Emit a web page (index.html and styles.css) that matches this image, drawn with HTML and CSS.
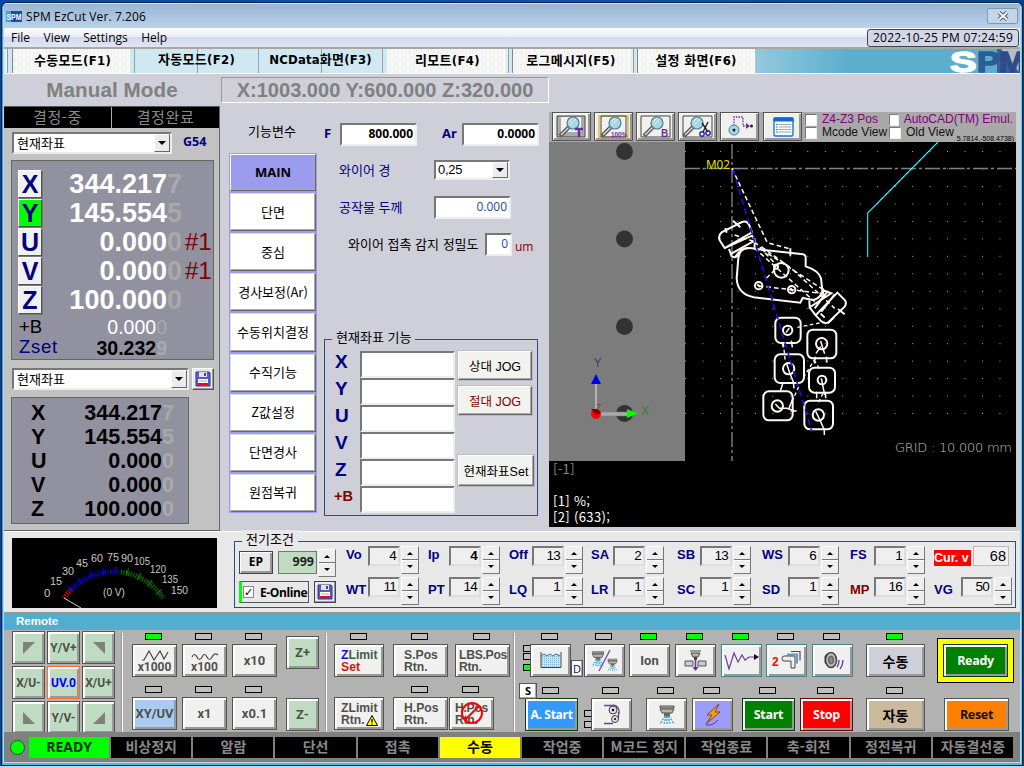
FILE: index.html
```html
<!DOCTYPE html>
<html lang="ko">
<head>
<meta charset="utf-8">
<title>SPM EzCut Ver. 7.206</title>
<link rel="stylesheet" href="styles.css">
</head>
<body>
<svg class="defs" width="0" height="0">
  <defs>
    <symbol id="lens" viewBox="0 0 33 25">
      <path d="M3 22L12 13" stroke="#555" stroke-width="4"/><path d="M4 21L12 13" stroke="#ddd" stroke-width="1.5"/>
      <circle cx="16" cy="9" r="6" fill="#a9d5e6" stroke="#4a7f98" stroke-width="1.2"/><path d="M12 8l4-4M13 11l6-6" stroke="#e8f8ff"/>
    </symbol>
    <symbol id="disk" viewBox="0 0 16 16">
      <path d="M1 1h13l1 1v13H1z" fill="#5b5bc4" stroke="#333399"/><path d="M4 1h8v5H4z" fill="#dfe3f5"/><path d="M9 2h2v3H9z" fill="#447"/><path d="M3 8h10v6H3z" fill="#fff"/><path d="M4 10h8" stroke="#aaa"/><path d="M3 13h10" stroke="#f00" stroke-width="2"/>
    </symbol>
    <symbol id="shower" viewBox="0 0 20 20">
      <path d="M3 1h14v2H3zM3 4h14l-2 4H5z" fill="#bbb5a8" stroke="#444" stroke-width=".9"/><path d="M7 8h6v3H7z" fill="#666"/><path d="M8 11L3 19M9 11L7 19M11 11l2 8M12 11l5 8M10 11v8" stroke="#4ba3c7" stroke-width="1.4" stroke-dasharray="2 1"/>
    </symbol>
    <pattern id="dots" width="17.47" height="17.47" patternUnits="userSpaceOnUse" x="136" y="9"><rect width="1" height="1" fill="#aaa"/></pattern>
    <pattern id="check" width="2" height="2" patternUnits="userSpaceOnUse"><rect width="2" height="2" fill="#c5e5f0"/><rect width="1" height="1" fill="#7bb9d2"/></pattern>
    <linearGradient id="rod"><stop offset="0" stop-color="#666"/><stop offset=".5" stop-color="#ccc"/><stop offset="1" stop-color="#666"/></linearGradient>
  </defs>
</svg>
<div class="window">
  <header class="titlebar">
    <svg width="16" height="11" viewBox="0 0 16 11"><rect width="16" height="11" fill="#1b4fa5"/><rect width="5" height="11" fill="#3fa2dc"/><text x=".5" y="9" font-family="Liberation Sans" font-weight="bold" font-size="9" textLength="15" lengthAdjust="spacingAndGlyphs" fill="#fff">SPM</text></svg>
    <span class="title">SPM EzCut Ver. 7.206</span>
    <span class="close"><svg width="12" height="10" viewBox="0 0 12 10"><path d="M2 1.5L10 8.5M10 1.5L2 8.5" stroke="#555b66" stroke-width="4"/><path d="M2 1.5L10 8.5M10 1.5L2 8.5" stroke="#f4f7fb" stroke-width="2"/></svg></span>
  </header>
  <nav class="menubar"><span>File</span><span>View</span><span>Settings</span><span>Help</span><span class="clock">2022-10-25 PM 07:24:59</span></nav>
  <nav class="tabs">
    <i class="grip"></i><span class="tab">수동모드(F1)</span>
    <div class="flat"><span class="ftab">자동모드(F2)</span><span class="ftab">NCData화면(F3)</span></div>
    <span class="tab">리모트(F4)</span><i class="grip"></i><span class="tab">로그메시지(F5)</span><i class="grip"></i><span class="tab">설정 화면(F6)</span>
    <div class="banner"><svg width="71" height="24" viewBox="0 0 71 24"><rect x="48" width="23" height="24" fill="#3d5f9b"/><path d="M52 0h19v24z" fill="#b9bfc9"/><g font-family="Liberation Sans" font-weight="bold" font-size="30" stroke-width="1.5"><text y="23" x="1" textLength="27" lengthAdjust="spacingAndGlyphs" fill="#fff" stroke="#fff">S</text><text y="23" x="28" fill="#2d5b94" stroke="#2d5b94" textLength="23" lengthAdjust="spacingAndGlyphs">P</text><text y="23" x="50" fill="#2e4c88" stroke="#2e4c88" textLength="27" lengthAdjust="spacingAndGlyphs">M</text></g></svg></div>
  </nav>

  <main class="main">
    <aside class="left">
      <h1>Manual Mode</h1>
      <div class="lpanel">
        <div class="states"><span>결정-중</span><span>결정완료</span></div>
        <div class="selrow"><div class="select">현재좌표<b class="drop"></b></div><strong class="g54">G54</strong></div>
        <div class="axes">
          <div class="axis"><b class="key">X</b><span class="val">344.217<i>7</i></span></div>
          <div class="axis"><b class="key on">Y</b><span class="val">145.554<i>5</i></span></div>
          <div class="axis"><b class="key">U</b><span class="val">0.000<i>0</i></span><em>#1</em></div>
          <div class="axis"><b class="key">V</b><span class="val">0.000<i>0</i></span><em>#1</em></div>
          <div class="axis"><b class="key">Z</b><span class="val">100.000<i>0</i></span></div>
          <div class="sub"><span>+B</span><span class="sv">0.000<i>0</i></span></div>
          <div class="sub zset"><span>Zset</span><span class="sv">30.232<i>9</i></span></div>
        </div>
        <div class="selrow second"><div class="select">현재좌표<b class="drop"></b></div><span class="save"><svg width="16" height="16"><use href="#disk"/></svg></span></div>
        <div class="axes2">
          <div><b>X</b><span>344.217<i>7</i></span></div><div><b>Y</b><span>145.554<i>5</i></span></div><div><b>U</b><span>0.000<i>0</i></span></div><div><b>V</b><span>0.000<i>0</i></span></div><div><b>Z</b><span>100.000<i>0</i></span></div>
        </div>
      </div>
    </aside>

    <section class="mid">
      <div class="coords">X:1003.000 Y:600.000 Z:320.000</div>
      <div class="midbody">
        <div class="funcs">
          <div class="flabel">기능변수</div>
          <div class="fmenu"><span class="sel">MAIN</span><span>단면</span><span>중심</span><span>경사보정(Ar)</span><span>수동위치결정</span><span>수직기능</span><span>Z값설정</span><span>단면경사</span><span>원점복귀</span></div>
        </div>
        <div class="params">
          <div class="prow r1"><b>F</b><span class="inp">800.000</span><b class="ar">Ar</b><span class="inp">0.0000</span></div>
          <div class="prow r2"><span class="lab">와이어 경</span><div class="select">0,25<b class="drop"></b></div></div>
          <div class="prow r3"><span class="lab">공작물 두께</span><span class="inp">0.000</span></div>
          <div class="prow r4"><span class="lab">와이어 접촉 감지 정밀도</span><span class="inp">0</span><span class="um">um</span></div>
          <div class="group jog">
            <span class="legend">현재좌표 기능</span>
            <div class="labels"><b>X</b><b>Y</b><b>U</b><b>V</b><b>Z</b><b class="pb">+B</b></div>
            <div class="fields"><i></i><i></i><i></i><i></i><i></i><i></i></div>
            <div class="jbtns"><span>상대 JOG</span><span class="red">절대 JOG</span><span class="set">현재좌표Set</span></div>
          </div>
        </div>
      </div>
    </section>

    <section class="right">
      <div class="toolbar">
        <div class="tools">
          <span><svg width="33" height="25"><path d="M2 2h28v21H2z" fill="#aaa" stroke="#444"/><path d="M6 3h20v15H6z" fill="#f1f1ee"/><use href="#lens" x="2" width="33" height="25"/><path d="M20 15h8M24 15v8" stroke="#6a2d9c" stroke-width="2.5"/></svg></span>
          <span><svg width="33" height="25"><path d="M2 2h29v21H2z" fill="#f1f1ee" stroke="#e2b34a" stroke-width="1.4"/><path d="M4 2h25v21H4z" fill="none" stroke="#444"/><use href="#lens" x="2" width="33" height="25"/><text x="14" y="23" class="tg" font-size="7.500" textLength="16" lengthAdjust="spacingAndGlyphs">100%</text></svg></span>
          <span><svg width="33" height="25"><path d="M2 2h29v21H2z" fill="#f1f1ee" stroke="#444"/><use href="#lens" x="2" width="33" height="25"/><text x="22" y="23" class="tg" font-size="10">B</text></svg></span>
          <span><svg width="33" height="25"><path d="M2 2h29v21H2z" fill="#f1f1ee" stroke="#444"/><use href="#lens" x="0" width="33" height="25"/><path d="M21 9l6 9M27 8l-5 10" stroke="#222" stroke-width="1.4"/><circle cx="21" cy="20" r="2.2" fill="none" stroke="#2424a5" stroke-width="1.4"/><circle cx="27" cy="19" r="2.2" fill="none" stroke="#2424a5" stroke-width="1.4"/></svg></span>
          <span><svg width="33" height="25"><path d="M11 12V3h9v9h5" fill="none" stroke="#6a2d9c" stroke-width="1.3" stroke-dasharray="1.5 1.2"/><path d="M23 9l4 3-4 3z" fill="#6a2d9c"/><circle cx="28.500" cy="12" r="1.500" fill="#222"/><circle cx="11" cy="16" r="5" fill="#a9d5e6" stroke="#4a7f98"/><circle cx="11" cy="16" r="1.500" fill="#222"/></svg></span>
          <span><svg width="33" height="25"><rect x="8" y="4" width="19" height="18" rx="1.500" fill="#fff" stroke="#1677d8" stroke-width="1.400"/><path d="M7.500 5.500h20" stroke="#1268d0" stroke-width="4"/><path d="M10 10.500h2M10 13h2M10 15.500h2M10 18h2" stroke="#2a7fd5"/><path d="M13 10.500h12M13 13h12M13 15.500h12M13 18h12" stroke="#9aa"/></svg></span>
        </div>
        <div class="checks"><span class="pur"><i></i>Z4-Z3 Pos</span><span class="pur"><i></i>AutoCAD(TM) Emul.</span><span><i></i>Mcode View</span><span><i></i>Old View</span></div>
        <span class="pos">5.7814,-508.4738)</span>
      </div>
      <svg class="view" width="467" height="319" viewBox="0 0 467 319">
        <rect width="467" height="319"/><rect width="136" height="319" fill="#7c7c7c"/>
        <rect x="136" y="9" width="317" height="266" fill="url(#dots)"/>
        <g fill="#333"><circle cx="75.500" cy="9.500" r="8.500"/><circle cx="75.500" cy="97" r="8.500"/><circle cx="75.500" cy="184.500" r="8.500"/><circle cx="75.500" cy="271.500" r="8.500"/></g>
        <path d="M183 2V319M136 26.500H467" stroke="#808080" stroke-width="1.400" stroke-dasharray="15 3 3 3" fill="none"/>
        <text x="157" y="27" font-size="12" fill="#e0e000" font-family="Noto Sans" textLength="24" lengthAdjust="spacingAndGlyphs">M02</text>
        <g transform="translate(-1,-37) scale(.33333)" fill="none" stroke="#fff9f2" stroke-width="6">
          <path d="M1170 111L959 324V456" stroke="#00f3ff" stroke-width="3.500"/>
          <path d="M1168 113L990 293" stroke="#eee" stroke-width="2" stroke-dasharray="6 12"/>
          <path d="M552 190L658 413L726 432M620 410L690 485L650 525M640 433L820 550M620 430L800 590M632 543L731 554L824 566M560 390L620 410M640 425L730 490L815 568L860 610" stroke-dasharray="14 9" stroke-width="4.500"/>
          <path d="M727 430v22M555 347l22 20M840 655l18-18M870 612l20 16"/>
          <path d="M589 431Q600 426 625 432L765 448Q774 450 773 460L773 484Q812 496 819 520L823 557Q818 580 795 585L764 579L757 593L617 577Q568 567 566 520L571 460Q574 438 589 431Z"/>
          <path d="M530 429L514 404Q511 390 522 381L582 351Q597 346 603 359L612 382ZM530 429L612 392L620 406L620 430M543 432L551 454Q565 461 575 449M550 446L620 407M563 455Q575 430 605 429"/>
          <path d="M868 563L889 584Q898 593 890 605L842 651Q831 659 820 649L803 631ZM824 555L850 565L785 607L784 586M803 631L785 607M820 620L860 568M800 610L840 558M815 586Q832 577 824 550"/>
          <circle cx="700" cy="496" r="22"/><circle cx="684" cy="485" r="6"/><circle cx="632" cy="542" r="11"/><circle cx="731" cy="554" r="11"/>
          <path d="M628 538l8 8M727 550l8 8"/><path d="M532 369l4 14M830 638l-12-12"/>
        </g>
        <g transform="translate(-1,168) scale(.33333)" fill="none" stroke="#fff9f2" stroke-width="6">
          <rect x="682" y="23" width="76" height="76" rx="17"/><rect x="778" y="59" width="87" height="86" rx="17"/><rect x="680" y="133" width="88" height="86" rx="17"/><rect x="783" y="173" width="78" height="75" rx="17"/><rect x="646" y="244" width="88" height="87" rx="17"/><rect x="769" y="272" width="86" height="86" rx="17"/>
          <circle cx="719" cy="61" r="14"/><circle cx="821" cy="101" r="17"/><circle cx="722" cy="176" r="17"/><circle cx="822" cy="210" r="13"/><circle cx="688" cy="288" r="17"/><circle cx="811" cy="315" r="17"/>
          <path d="M724 54l-10 14M818 93l6 20 6 18M818 110l-14 20M715 158l10 30 12 30M820 205l10 50M682 282l12 13 22 0 24 8M803 304l12 24 14 32M702 96l4 16M730 92l3 20M802 140l-3 20M835 140l2 18M705 218l-9 28M736 215l2 20M806 245v20M833 245v20M735 265l-12 30M728 303h18M829 355v20" stroke-width="4.500"/>
          <path d="M748 52L830 36M706 100L712 155M802 145L768 200M798 150L814 175M752 230L732 275M825 250L808 285" stroke-width="4" stroke-dasharray="11 8"/>
        </g>
        <path d="M184 28L263 290" stroke="#1313e8" stroke-width="1.700" stroke-dasharray="6 4"/>
        <rect x="45" y="236" width="4" height="34" fill="url(#rod)"/><rect x="50" y="270" width="29" height="4" fill="#aaa" stroke="#777" stroke-width=".5"/>
        <path d="M42 242l5-10 5 10z" fill="#00e"/><path d="M78 267l11 4.500-11 4.500z" fill="#0f0"/><circle cx="47" cy="272" r="5" fill="#f00"/><path d="M42 267h6l4 4-5 2z" fill="#800"/>
        <g class="dj" font-size="12"><text x="45" y="225" fill="#000080">Y</text><text x="92" y="273" fill="#008000">X</text><text x="46" y="269" font-size="9" fill="#800000">Z</text><text x="346" y="310" font-size="13" fill="#c4c4c4" textLength="117">GRID : 10.000 mm</text></g>
      </svg>
      <pre class="console"><span>[-1]</span>

[1] %;
[2] (633);</pre>
    </section>
  </main>

  <section class="elec">
    <svg class="meter" width="205" height="70" viewBox="0 0 205 70">
      <rect width="205" height="70"/>
      <g fill="none" stroke-width="5" stroke-dasharray="1 1.500"><path d="M52 60A60 60 0 0 1 60 51" stroke="#f00"/><path d="M60 51A60 60 0 0 1 108 34" stroke="#00f"/><path d="M109 34A60 60 0 0 1 151 60" stroke="#008000"/></g>
      <g fill="none" stroke-width="8" stroke-dasharray="1 11.500"><path d="M58 51A60 60 0 0 1 107 33" stroke="#00f"/><path d="M115 34A60 60 0 0 1 151 60" stroke="#008000"/></g>
      <path d="M52 60L69 70" stroke="#ccc"/>
      <g class="scale"><text x="32" y="59">0</text><text x="38" y="47" textLength="12" lengthAdjust="spacingAndGlyphs">15</text><text x="50" y="37" textLength="12" lengthAdjust="spacingAndGlyphs">30</text><text x="64" y="29" textLength="12" lengthAdjust="spacingAndGlyphs">45</text><text x="79" y="24" textLength="12" lengthAdjust="spacingAndGlyphs">60</text><text x="95" y="23" textLength="12" lengthAdjust="spacingAndGlyphs">75</text><text x="109" y="24" textLength="12" lengthAdjust="spacingAndGlyphs">90</text><text x="122" y="27" textLength="16" lengthAdjust="spacingAndGlyphs">105</text><text x="138" y="35" textLength="16" lengthAdjust="spacingAndGlyphs">120</text><text x="150" y="45" textLength="16" lengthAdjust="spacingAndGlyphs">135</text><text x="159" y="56" textLength="17" lengthAdjust="spacingAndGlyphs">150</text><text x="91" y="58" textLength="22" lengthAdjust="spacingAndGlyphs">(0 V)</text></g>
    </svg>
    <div class="group cond">
      <span class="legend">전기조건</span>
      <div class="ep">
        <div class="eprow"><span class="epb">EP</span><span class="n999">999</span><i class="spin"></i></div>
        <div class="eprow two"><span class="online"><i>✓</i>E-Online</span><span class="save big"><svg width="16" height="16"><use href="#disk"/></svg></span></div>
      </div>
      <div class="knobs">
        <div><b>Vo</b><span>4</span><i class="spin"></i></div><div><b>Ip</b><span class="bd">4</span><i class="spin"></i></div><div><b>Off</b><span>13</span><i class="spin"></i></div><div><b>SA</b><span>2</span><i class="spin"></i></div><div><b>SB</b><span>13</span><i class="spin"></i></div><div><b>WS</b><span>6</span><i class="spin"></i></div><div><b>FS</b><span>1</span><i class="spin"></i></div><div class="cur"><b>Cur. v</b><span>68</span></div>
        <div><b>WT</b><span>11</span><i class="spin"></i></div><div><b>PT</b><span>14</span><i class="spin"></i></div><div><b>LQ</b><span>1</span><i class="spin"></i></div><div><b>LR</b><span>1</span><i class="spin"></i></div><div><b>SC</b><span>1</span><i class="spin"></i></div><div><b>SD</b><span>1</span><i class="spin"></i></div><div><b class="mp">MP</b><span>16</span><i class="spin"></i></div><div><b>VG</b><span>50</span><i class="spin"></i></div>
      </div>
    </div>
  </section>

  <div class="rhead">Remote</div>
  <section class="remote">
    <div class="pad">
      <span class="btn"><svg width="12" height="12"><path d="M0 0h12L0 12z"/></svg></span><span class="btn">Y/V+</span><span class="btn"><svg width="12" height="12"><path d="M0 0h12v12z"/></svg></span>
      <span class="btn">X/U-</span><span class="btn uv">UV.0</span><span class="btn">X/U+</span>
      <span class="btn"><svg width="12" height="12"><path d="M0 0v12h12z"/></svg></span><span class="btn">Y/V-</span><span class="btn"><svg width="12" height="12"><path d="M12 0v12H0z"/></svg></span>
    </div>
    <div class="sec s2">
      <div class="rows">
        <div class="rrow">
          <div class="cell"><i class="led on"></i><span class="btn w45 col"><svg width="28" height="11"><path d="M1 10h2L8 1l5 9 6-9 4 8 4-7" fill="none" stroke="#444" stroke-width="1.200"/></svg>x1000</span></div>
          <div class="cell"><i class="led"></i><span class="btn w45 col"><svg width="28" height="11"><path d="M1 7q2.500-5 5 0t5 0 5 0 5 0 6-2" fill="none" stroke="#444" stroke-width="1.200"/></svg>x100</span></div>
          <div class="cell"><i class="led"></i><span class="btn w45 big">x10</span></div>
        </div>
        <div class="rrow">
          <div class="cell"><i class="led"></i><span class="btn w45 big sky">XY/UV</span></div>
          <div class="cell"><i class="led"></i><span class="btn w45 big">x1</span></div>
          <div class="cell"><i class="led"></i><span class="btn w45 big">x0.1</span></div>
        </div>
      </div>
      <div class="zs"><span class="btn">Z+</span><span class="btn">Z-</span></div>
    </div>
    <div class="sec s3">
      <div class="rrow">
        <div class="cell"><i class="led"></i><span class="btn w50 two"><span class="zl"><em>Z</em>Limit<br><u>Set</u></span></span></div>
        <div class="cell"><i class="led"></i><span class="btn w55 two">S.Pos<br>Rtn.</span></div>
        <div class="cell"><i class="led"></i><span class="btn w55 two lbs">LBS.Pos<br>Rtn.</span></div>
      </div>
      <div class="rrow b">
        <div class="cell"><i class="led off"></i><span class="btn w50 two"><span>ZLimit<br>Rtn.<svg class="warn" width="12" height="11"><path d="M6 .5L11.500 10.500H.5z" fill="#ff0" stroke="#000"/><path d="M6 4v3.500M6 8.500v1" stroke="#000" stroke-width="1.300"/></svg></span></span></div>
        <div class="cell"><i class="led"></i><span class="btn w55 two">H.Pos<br>Rtn.</span></div>
        <div class="cell"><i class="led"></i><span class="btn w45 two hno">H.Pos<br>Rtn.<svg class="ban" width="24" height="24"><circle cx="12" cy="12" r="10" fill="none" stroke="#f00" stroke-width="2"/><path d="M5 19L19 5" stroke="#f00" stroke-width="2"/></svg></span></div>
      </div>
    </div>
    <div class="sec s4">
      <div class="rrow">
        <div class="minis"><i></i><i></i><i class="on"></i></div>
        <div class="cell"><i class="led"></i><span class="btn w41"><svg width="22" height="18"><path d="M1 3l3-1.500 3 2 3-2 3 2 3-2 4 1.500V15H1z" fill="url(#check)"/><path d="M1 0v15.500h20V0" fill="none" stroke="#444"/><path d="M1 4l3-2 3 2 3-2 3 2 3-2 4 2" fill="none" stroke="#247ba5"/></svg></span></div>
        <span class="tag d">D</span>
        <div class="cell"><i class="led"></i><span class="btn w41"><svg width="30" height="24"><use href="#shower" x="0" y="1" width="16" height="18"/><use href="#shower" x="16" y="9" width="13" height="14"/><path d="M20 1L9 22" stroke="#7a55b0" stroke-width="1.500"/></svg></span></div>
        <div class="cell"><i class="led on"></i><span class="btn w41 big">Ion</span></div>
        <div class="cell"><i class="led on"></i><span class="btn w41"><svg width="24" height="22"><path d="M6 1h11M7 3h9l-2 4H9z" stroke="#444" fill="#bbb5a8"/><path d="M10 7h3v3h-3z" fill="#444"/><path d="M1 11h8v5H1zM14 11h8v5h-8z" fill="#ccc" stroke="#555"/><path d="M11.500 10v9" stroke="#6a2d9c" stroke-width="1.500"/><path d="M8.500 17h6l-3 4z" fill="#6a2d9c"/></svg></span></div>
        <div class="cell"><i class="led on"></i><span class="btn w41 teal"><svg width="36" height="20"><path d="M1 4l4 14 5-16 4 9 4-7 3 5 4-3h7" fill="none" stroke="#6a3d9c" stroke-width="1.200"/><path d="M30 3l5 3-5 3z" fill="#203"/></svg></span></div>
        <div class="cell"><i class="led"></i><span class="btn w41 teal"><svg width="32" height="22"><text x="1" y="16" font-family="Liberation Sans" font-weight="bold" font-size="12" fill="#f00">2</text><path d="M16 4.500h10v9" fill="none" stroke="#58a2b4" stroke-width="2"/><path d="M20 1.500h9v9" fill="none" stroke="#6a2d9c" stroke-width="1.200"/><path d="M13 6h11v12h-4v-7h-7q-2 0-2-2.500t2-2.500z" fill="#eee" stroke="#444"/></svg></span></div>
        <div class="cell"><i class="led"></i><span class="btn w41 teal"><svg width="26" height="24"><path d="M8 4L5 7v7l4 4" fill="#888" stroke="#444"/><ellipse cx="11" cy="11" rx="5.500" ry="7.500" fill="#bbb" stroke="#444" stroke-width="1.500"/><ellipse cx="11" cy="11" rx="2.500" ry="4" fill="#888" stroke="#555"/><path d="M17 18q2-3 2-7M20 20q3-4 3-9" fill="none" stroke="#6a3d9c" stroke-width="1.400"/></svg></span></div>
        <div class="cell"><i class="led on"></i><span class="btn w59 ko lav">수동</span></div>
        <div class="readybox"><span class="btn w65 act green">Ready</span></div>
      </div>
      <div class="rrow b">
        <div class="cell"><i class="led"></i><span class="tag s">S</span><span class="btn w53 act blue">A. Start</span></div>
        <div class="minis"><i></i><i></i></div>
        <div class="cell"><i class="led"></i><span class="btn w41"><svg width="24" height="23"><circle cx="13" cy="7" r="4" fill="#ddd" stroke="#444"/><circle cx="13" cy="7" r="1.200"/><circle cx="15" cy="16" r="3.500" fill="#ddd" stroke="#444"/><circle cx="15" cy="16" r="1"/><path d="M4 2.500h9M18.500 9v6M4 20.500h9" fill="none" stroke="#6a3d9c" stroke-width="1.300"/><path d="M13 2q7 1 6 9" fill="none" stroke="#555" stroke-width="1.300"/></svg></span></div>
        <div class="cell"><i class="led"></i><span class="btn w41"><svg width="20" height="20"><use href="#shower"/></svg></span></div>
        <div class="cell"><i class="led"></i><span class="btn w41 vio"><svg width="20" height="24"><path d="M16 1L4 12h5L3 21 17 9h-5z" fill="#ff9a1c" stroke="#7a4a20"/><path d="M3 22q7 1 12-5" fill="none" stroke="#6a2d9c"/></svg></span></div>
        <div class="cell"><i class="led"></i><span class="btn w53 act green">Start</span></div>
        <div class="cell"><i class="led"></i><span class="btn w53 act stop">Stop</span></div>
        <div class="cell"><i class="led"></i><span class="btn w59 ko tan">자동</span></div>
        <div class="cell"><i class="led off"></i><span class="btn w65 act reset">Reset</span></div>
      </div>
    </div>
  </section>

  <footer class="status"><i class="lamp"></i><div><span class="rdy">READY</span><span>비상정지</span><span>알람</span><span>단선</span><span>접촉</span><span class="yel">수동</span><span>작업중</span><span>M코드 정지</span><span>작업종료</span><span>축-회전</span><span>정전복귀</span><span>자동결선중</span></div></footer>
</div>
<div class="taskbar"></div>
</body>
</html>
```
FILE: styles.css
```css
* { box-sizing: border-box; }
body { margin: 0; width: 1024px; height: 768px; overflow: hidden; display: flex; flex-direction: column; background: linear-gradient(90deg, #0746a8, #0a54b0 60%, #064088); font-family: "Liberation Sans", "Noto Sans CJK KR", sans-serif; font-size: 12px; color: #000; white-space: nowrap; }
.defs { position: absolute; }
i, em, u { font-style: normal; text-decoration: none; }
.window { margin: 3px 2px 0 2px; height: 762px; border: 1px solid #c8e2f4; border-left-color: #18b4f0; border-right-color: #5ad0f0; border-bottom: 2px solid #44bfe0; border-radius: 5px 5px 0 0; background: #cecfd8; display: flex; flex-direction: column; box-shadow: 0 0 0 1px #10243c; padding: 0 1px; overflow: hidden; }
.taskbar { margin-top: 1px; height: 2px; background: #c9d3e0; }

.titlebar { height: 24px; flex: none; display: flex; align-items: center; padding: 0 2px; background: linear-gradient(#9ab5d3, #bad2ea); font-family: "Open Sans", sans-serif; }
.title { margin-left: 4px; letter-spacing: .1px; }
.close { margin-left: auto; width: 31px; height: 16px; border: 1px solid #8297b2; border-radius: 2px; background: #c2d5e9; display: flex; align-items: center; justify-content: center; }
.menubar { height: 19px; flex: none; display: flex; align-items: center; padding-left: 7px; gap: 13.500px; background: linear-gradient(#fff 0, #e9edf6 45%, #d5dbee 50%, #dfe5f4 100%); font-family: "Open Sans", sans-serif; }
.clock { margin-left: auto; margin-right: 1px; width: 152px; height: 18px; line-height: 15px; border: 1px solid #444; border-radius: 3px; background: #d3d6e6; text-align: center; letter-spacing: .26px; }
.tabs { height: 27px; flex: none; display: flex; border-top: 2px solid #aaa79e; border-bottom: 1px solid #fff; background: #cfe8f1; font: bold 13px "DejaVu Sans Condensed", "Noto Sans CJK KR", sans-serif; line-height: 24px; letter-spacing: .3px; }
.grip { width: 8px; flex: none; border-right: 1px solid #888; box-shadow: inset 3px 0 #e0f0f5, inset 4px 0 #999; }
.grip:first-child { width: 9px; }
.tab { width: 117px; flex: none; text-align: center; background: repeating-conic-gradient(#fff 0 25%, #eeeeec 0 50%) 0 0 / 2px 2px; border-right: 1px solid #fff; }
.grip:first-child + .tab { padding-left: 3px; }
.flat { width: 257px; flex: none; padding: 0 4px; display: flex; line-height: 22px; }
.ftab { flex: 1; text-align: center; border-left: 1px solid #8aa; background: linear-gradient(90deg, transparent 62px, #8fa2a8 62px 63px, transparent 63px); }
.flat .ftab:last-child { border-right: 1px solid #8aa; letter-spacing: .2px; }
.flat + .tab { width: 118px; padding-left: 4px; }
.banner { flex: 1; display: flex; justify-content: flex-end; background: linear-gradient(90deg, #93c9de, #5daecd 35%); overflow: hidden; }

.main { height: 457px; flex: none; display: flex; padding-top: 2px; }
.left { width: 216px; flex: none; }
h1 { margin: 0; height: 30px; line-height: 28px; font-size: 20.600px; color: #808080; text-align: center; letter-spacing: .1px; }
.lpanel { height: 425px; background: #c2c2c2; border: 1px solid #666; border-width: 0 1px 1px 0; }
.states { height: 22px; display: flex; background: #000; border-top: 1px solid #555; color: #8c8c8c; font: 15px/20px "Noto Sans CJK KR"; letter-spacing: .6px; }
.states span { flex: 1; text-align: center; }
.states span + span { border-left: 1px solid #aaa; }
.selrow { display: flex; margin: 4px 0 0 8px; height: 22px; }
.select { width: 160px; display: flex; justify-content: space-between; align-items: center; background: #fff; border: 2px solid; border-color: #777 #eee #eee #777; padding-left: 3px; font: 13px/16px "Noto Sans CJK KR"; }
.drop { width: 16px; align-self: stretch; background: #ececec; border: 1px solid; border-color: #fff #666 #666 #fff; display: flex; align-items: center; justify-content: center; }
.drop::after { content: ""; border: 4px solid transparent; border-top-color: #000; border-bottom: 0; }
.g54 { margin-left: 11px; font: bold 12.500px/20px "Open Sans"; color: #000080; }
.axes { margin: 6px 0 0 7px; width: 203px; height: 200px; border: 1px solid #666; background: #9191a0; padding: 8px 0 0 6px; }
.axis { height: 29px; display: flex; align-items: center; font-size: 27px; color: #fff; }
.key { width: 24px; height: 28px; line-height: 27px; font-size: 25px; text-align: center; color: #000080; background: #f0f0f0; border: 1px solid; border-color: #fff #555 #555 #fff; box-shadow: 1px 1px #777; }
.key.on { background: #0f0; }
.val { width: 140px; padding-top: 2px; text-align: right; font-weight: bold; }
.val i, .sv i, .axes2 i { color: #a9a9a9; }
.axis em { font-size: 24px; color: #800000; margin-left: 3px; padding-top: 1px; }
.sub { height: 21px; display: flex; font-size: 19.500px; line-height: 26px; }
.sub span:first-child { width: 61px; margin-left: 1px; font-size: 18.500px; }
.sv { width: 87px; text-align: right; color: #fff; }
.sub.zset span:first-child { color: #000080; letter-spacing: .7px; line-height: 24px; }
.zset .sv { font-weight: bold; color: #000; }
.second { margin-top: 8px; }
.second .select { width: 177px; }
.save { width: 22px; margin-left: 3px; border: 1px solid; border-color: #fff #555 #555 #fff; background: #e8e8e8; box-shadow: inset -1px -1px #999; display: flex; align-items: center; justify-content: center; }
.axes2 { margin: 7px 0 0 7px; width: 178px; height: 127px; border: 1px solid #666; background: #9191a0; padding: 3px 14px 0 19px; font-size: 21.500px; font-weight: bold; line-height: 24px; }
.axes2 div { display: flex; justify-content: space-between; }

.mid { width: 329px; flex: none; }
.coords { margin: 1px 0 0 1px; height: 26px; line-height: 25px; border: 1px solid; border-color: #999 #fff #fff #999; font-size: 20.050px; font-weight: bold; color: #808080; text-align: center; }
.midbody { display: flex; }
.funcs { width: 97px; padding-left: 9px; font: 13px "Noto Sans CJK KR"; }
.flabel { height: 50px; line-height: 56px; padding-left: 19px; }
.fmenu { width: 88px; background: #9c9cf0; padding: 1px; display: flex; flex-direction: column; gap: 2px; height: 360px; }
.fmenu span { flex: 1; width: 86px; background: #fff; border: 1px solid; border-color: #ddd #666 #666 #ddd; box-shadow: inset -1px -1px #aaa; display: flex; align-items: center; justify-content: center; padding-bottom: 2px; }
.fmenu .sel { background: #9c9cee; font: bold 13px "Open Sans"; border-color: #fff #666 #666 #fff; padding-bottom: 1px; }
.params { flex: 1; }
.prow { display: flex; color: #000080; font: 13px "Noto Sans CJK KR"; align-items: center; }
.lab { padding-bottom: 2px; }
.inp { height: 23px; background: #fff; border: 2px solid; border-color: #777 #eee #eee #777; text-align: right; padding-right: 2px; font: 12px/18px "Open Sans"; color: #1c4c9c; width: 77px; }
.r1 { margin-top: 20px; padding-left: 7px; }
.r1 b { width: 16px; font: bold 13px "Open Sans"; padding-bottom: 3px; }
.r1 b.ar { width: 20px; margin-left: 25px; }
.r1 .inp { font-weight: bold; color: #000; }
.r2 { margin-top: 14px; height: 20px; padding-left: 22px; }
.r2 .lab, .r3 .lab { width: 95px; }
.r2 .select { width: 76px; height: 20px; padding-left: 2px; color: #000; font: 13px/16px "Liberation Sans"; letter-spacing: -.3px; }
.r3 { margin-top: 16px; padding-left: 22px; }
.r4 { margin-top: 14px; padding-left: 31px; }
.r4 .lab { width: 137px; color: #000; }
.r4 .inp { width: 27px; }
.um { margin-left: 3px; color: #8b0000; font: 12px "Open Sans"; padding-top: 4px; }
.group { position: relative; border: 1px solid #24508a; display: flex; }
.legend { position: absolute; left: 7px; top: -12px; padding: 0 4px; background: #cecfd8; font: 13px/18px "Noto Sans CJK KR"; }
.jog { margin: 83px 0 0 7px; width: 214px; height: 177px; padding: 11px 0 0 10px; }
.labels { width: 25px; font-size: 19px; color: #000080; line-height: 27px; margin-top: -3px; }
.labels b { display: block; }
.labels .pb { color: #800000; font-size: 14.500px; margin-left: -1px; }
.fields { width: 95px; }
.fields i { display: block; height: 27px; background: #fff; border: 2px solid; border-color: #777 #eee #eee #777; }
.jbtns { margin-left: 3px; color: #000; font: 12.500px "Liberation Sans", "Noto Sans CJK KR"; }
.jbtns span { display: flex; align-items: center; justify-content: center; width: 74px; height: 29px; background: #f2f2ef; border: 1px solid; border-color: #fff #666 #666 #fff; box-shadow: inset -1px -1px #aaa, 0 0 0 1px #bbb; }
.jbtns .red { color: #800000; margin-top: 6px; }
.jbtns .set { width: 76px; height: 31px; margin-top: 40px; }

.right { width: 467px; flex: none; padding-top: 36px; }
.toolbar { position: relative; height: 30px; background: #a9a9a9; display: flex; padding-left: 3px; }
.tools { display: flex; gap: 3px; }
.tools span { width: 39px; height: 29px; border: 1px solid #555; box-shadow: inset 1px 1px #fff, inset -2px -2px #999; background: #efefec; display: flex; align-items: center; justify-content: center; }
.tools span:last-child { margin-left: 1px; }
.tg { font-family: "Liberation Sans"; font-weight: bold; fill: #6a2d9c; }
.dj { font-family: "DejaVu Sans", sans-serif; font-weight: 200; }
.checks { margin-left: 3px; display: grid; grid-template-columns: 84px 124px; grid-template-rows: 13px 13px; padding-top: 1px; line-height: 13px; color: #111; }
.checks span { display: flex; align-items: center; }
.checks i { width: 12px; height: 12px; margin-right: 5px; background: #fff; border: 1px solid; border-color: #777 #eee #eee #777; }
.checks .pur { color: #800080; }
.pos { position: absolute; right: 2px; bottom: -1px; font-size: 7px; line-height: 9px; }
.view { display: block; }
.console { margin: 0; height: 66px; background: #000; color: #fff; font: 13px/16px "Noto Sans CJK KR"; padding-left: 4px; letter-spacing: .35px; }
.console span { color: #888; }

.elec { height: 82px; flex: none; background: #e8e8e8; border-top: 1px solid #fff; border-bottom: 1px solid #999; display: flex; padding: 6px 0 0 8px; }
.meter { flex: none; }
.scale { font: 11.500px "Liberation Sans"; fill: #c8c8c8; }
.cond { margin: 3px 0 0 17px; width: 782px; height: 67px; }
.cond .legend { background: #e8e8e8; top: -12px; }
.ep { width: 107px; padding: 5px 0 0 4px; }
.eprow { display: flex; height: 28px; }
.epb { width: 34px; height: 23px; margin: 4px 5px 0 0; border: 1px solid #444; box-shadow: inset 1px 1px #fff, inset -2px -2px #999; text-align: center; font: bold 12px/20px "Open Sans"; }
.n999 { width: 39px; height: 23px; margin: 4px 1px 0 0; border: 1px solid #777; background: #bfdcc0; text-align: right; font: bold 12.500px/20px "Open Sans"; color: #222; padding-right: 2px; }
.spin { width: 18px; height: 28px; flex: none; border: 1px solid; border-color: #fff #777 #777 #fff; background: linear-gradient(#eee 12px, #777 12px 13px, #fff 13px 14px, #eee 14px); display: flex; flex-direction: column; justify-content: space-between; align-items: center; padding: 5px 0; }
.spin::before { content: ""; border: 3px solid transparent; border-bottom-color: #000; border-top: 0; }
.spin::after { content: ""; border: 3px solid transparent; border-top-color: #000; border-bottom: 0; }
.eprow .spin { margin-top: 2px; }
.eprow.two { margin-top: 6px; height: 22px; }
.online { width: 70px; height: 22px; display: flex; align-items: center; border: 1px solid #555; border-left: 3px solid #0f0; font: bold 12px "Open Sans"; letter-spacing: -.4px; }
.online i { width: 11px; height: 12px; line-height: 11px; margin: 0 6px 0 1px; background: #fff; border: 1px solid #888; font-size: 11px; font-family: "DejaVu Sans"; }
.save.big { margin-left: 5px; border-color: #444; }
.knobs { display: grid; grid-template-columns: 77px 81px 83px 81px 87px 88px 86px 87px; grid-template-rows: 31px 31px; padding-top: 4px; }
.knobs div { display: flex; }
.knobs b { margin-left: 9px; flex: 1; font: bold 13px/17px "Liberation Sans"; color: #000080; }
.knobs div:nth-child(n+9) b { padding-top: 4px; }
.knobs div:nth-child(8n+1) b { margin-left: 4px; }
.knobs div:nth-child(8n+4) b { margin-left: 8px; }
.knobs div:nth-child(8n+5) b { margin-left: 13px; }
.knobs div:nth-child(8n+6) b, .knobs div:nth-child(8n+7) b { margin-left: 11px; }
.knobs .mp { color: #800000; }
.knobs span { width: 32px; height: 20px; margin-right: 1px; border: 2px solid; border-color: #777 #ddd #ddd #777; background: #efefef; text-align: right; padding-right: 2px; font: 13.500px/16px "Liberation Sans"; letter-spacing: -.8px; }
.knobs .bd { font-weight: bold; }
.knobs .cur b { flex: none; width: 37px; height: 16px; margin: 4px 2px 0 9px; background: #f00; color: #fff; line-height: 17px; font-size: 12.500px; }
.knobs .cur span { width: 36px; border: 1px solid #bbb; font-size: 14.500px; line-height: 18px; letter-spacing: 0; }

.rhead { height: 17px; flex: none; background: #52aed0; color: #fff; font: bold 11.500px/17px "Liberation Sans"; padding-left: 12px; }
.remote { height: 102px; flex: none; background: #b2b2b2; display: flex; overflow: hidden; font-weight: bold; color: #50504a; }
.btn { display: flex; align-items: center; justify-content: center; height: 33px; flex: none; border: 1px solid #55554f; box-shadow: inset 2px 2px #fff, inset -2px -2px #999; background: #f0f0f0; font-weight: bold; overflow: visible; }
.pad { margin: 1px 6px 0 8px; width: 103px; display: grid; grid-template-columns: repeat(3, 33px); grid-template-rows: repeat(3, 33px); gap: 2px; }
.pad .btn { background: #bfdcc2; font: bold 12px "Roboto"; }
.pad .btn svg { fill: #80807c; }
.pad .uv { color: #00f; border-color: #ff7030; }
.sec { margin-top: 3px; border-left: 1px solid #999; box-shadow: inset 1px 0 #fff; padding-left: 11px; }
.s2 { width: 204px; display: flex; padding-left: 10px; }
.s3 { width: 188px; padding-left: 8px; }
.s4 { width: 507px; padding-left: 9px; }
.rrow { display: grid; height: 53px; }
.cell { display: flex; flex-direction: column; align-items: center; justify-self: start; gap: 4px; }
.led { width: 17px; height: 7px; flex: none; border: 1px solid #000; background: #bfbfbf; margin-right: 2px; }
.led.on, .minis .on { background: #0f0; }
.led.off { visibility: hidden; }
.s2 .rrow { grid-template-columns: 50px 50px 54px; }
.w41 { width: 41px; } .w45 { width: 45px; } .w50 { width: 50px; } .w53 { width: 53px; } .w55 { width: 55px; } .w59 { width: 59px; } .w65 { width: 65px; }
.btn.col { flex-direction: column; font: bold 12px/10px "Roboto"; gap: 1px; }
.btn.big { font: bold 13px "Roboto"; }
.btn.sky { background: #a9cbf2; }
.zs { display: flex; flex-direction: column; gap: 29px; padding-top: 3px; }
.zs .btn { width: 33px; background: #bfdcc2; font: bold 13px "Roboto"; }
.s3 .rrow { grid-template-columns: 59px 62px 55px; }
.s3 .b { grid-template-columns: 59px 56px 55px; }
.btn.two { font: bold 12.200px/12px "Liberation Sans"; display: block; padding: 4px 0 0 10px; position: relative; }
.btn.w50.two { padding-left: 6px; }
.btn.two.lbs { padding-left: 3px; letter-spacing: -.3px; }
.btn.two.hno { padding-left: 5px; letter-spacing: -.3px; }
.zl { color: #3f6040; } .zl em { color: #1010d0; } .zl u { color: #c82010; }
.warn { vertical-align: -2px; margin-left: 1px; }
.ban { position: absolute; left: 10px; top: 3px; }
.s4 .rrow { grid-template-columns: 7px 41px 13px 45px 46px 46px 45px 46px 54px 71px 77px; height: 54px; }
.s4 .rrow.b { grid-template-columns: 59px 7px 55px 46px 50px 58px 66px 78px 65px; padding-left: 2px; }
.minis { padding-top: 12px; display: flex; flex-direction: column; gap: 1px; }
.minis i { width: 8px; height: 7px; border: 1px solid #000; border-right: 0; background: #bfbfbf; }
.minis .on { margin-top: 3px; }
.b .minis { padding-top: 23px; gap: 4px; }
.tag { background: #fff; color: #000080; border: 1px solid #555; box-shadow: inset -1px -1px #aaa; text-align: center; font: bold 12px/16px "Open Sans"; }
.tag.d { margin-top: 27px; width: 12px; height: 17px; font-weight: normal; font-size: 11px; }
.b .cell { position: relative; }
.tag.s { position: absolute; left: -6px; top: -4px; width: 18px; height: 16px; line-height: 13px; font-size: 11px; color: #000; }
.teal { border-color: #4b8488; }
.ko { font: bold 14px "Noto Sans CJK KR"; color: #000; }
.btn.lav { background: #cfcfd9; } .btn.tan { background: #cbb99b; } .btn.vio { background: #9c9cfb; }
.act { font: bold 12.500px "Open Sans"; color: #fff; letter-spacing: -.3px; }
.green { background: #008000; border-color: #0a3a0a; }
.blue { background: #3399ff; border-color: #004400; font-size: 12px; }
.stop { background: #f00; border-color: #700; }
.reset { background: #ff8000; color: #111; }
.readybox { margin-top: 5px; width: 77px; height: 45px; border: 1px solid #000; background: #ff0; padding: 5px; }
.status { height: 30px; flex: none; background: #808080; display: flex; align-items: center; padding: 0 0 0 6px; }
.lamp { width: 15px; height: 15px; border-radius: 50%; background: #0f0; border: 1px solid #063; margin-right: 4px; }
.status div { width: 984px; display: grid; grid-template-columns: repeat(12, 1fr); gap: 2px; }
.status span { height: 21px; background: #000; color: #8a8a8a; text-align: center; font: bold 14px/19px "Noto Sans CJK KR"; }
.status .rdy { background: #0f0; color: #063006; font: bold 14px/20px "Open Sans"; }
.status .yel { background: #ff0; color: #000; }
```
